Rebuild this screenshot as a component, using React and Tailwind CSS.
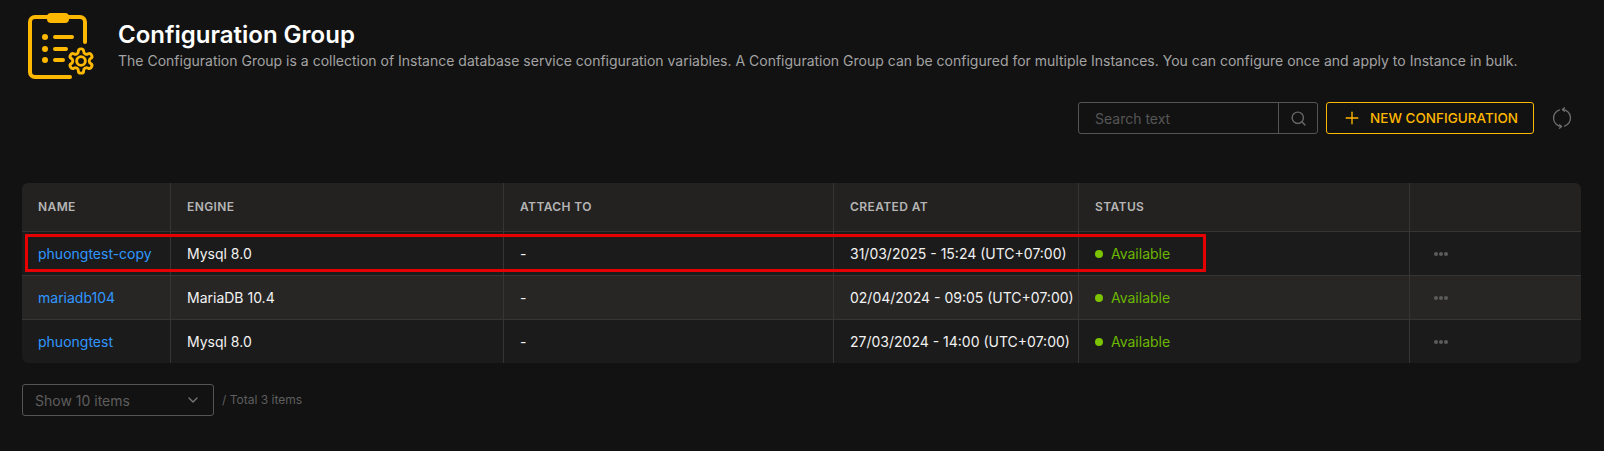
import React from 'react'
import { Search, Plus, ChevronDown } from 'lucide-react'

const rows = [
  { name: 'phuongtest-copy', engine: 'Mysql 8.0', created: '31/03/2025 - 15:24 (UTC+07:00)', bg: 'bg-[#1c1b1b]' },
  { name: 'mariadb104', engine: 'MariaDB 10.4', created: '02/04/2024 - 09:05 (UTC+07:00)', bg: 'bg-[#272625]' },
  { name: 'phuongtest', engine: 'Mysql 8.0', created: '27/03/2024 - 14:00 (UTC+07:00)', bg: 'bg-[#1c1b1b]' },
]

const GroupIcon = () => (
  <svg width="72" height="72" viewBox="26 10 72 72" fill="none" stroke="#ffb800" strokeLinecap="round" strokeLinejoin="round" className="shrink-0">
    <path d="M85 42V22a5 5 0 0 0-5-5H35a5 5 0 0 0-5 5v50a5 5 0 0 0 5 5h35" strokeWidth="4" />
    <rect x="47" y="13" width="22" height="10" rx="4" fill="#ffb800" stroke="none" />
    <circle cx="45" cy="37" r="3" fill="#ffb800" stroke="none" />
    <circle cx="45" cy="49" r="3" fill="#ffb800" stroke="none" />
    <circle cx="45" cy="60" r="3" fill="#ffb800" stroke="none" />
    <path d="M55 37h17M55 49h11M55 60h8" strokeWidth="4" />
    <svg x="66.5" y="46.5" width="29" height="29" viewBox="0 0 24 24" strokeWidth="2.4">
      <path d="M12.22 2h-.44a2 2 0 0 0-2 2v.18a2 2 0 0 1-1 1.73l-.43.25a2 2 0 0 1-2 0l-.15-.08a2 2 0 0 0-2.73.73l-.22.38a2 2 0 0 0 .73 2.73l.15.1a2 2 0 0 1 1 1.72v.51a2 2 0 0 1-1 1.74l-.15.09a2 2 0 0 0-.73 2.73l.22.38a2 2 0 0 0 2.73.73l.15-.08a2 2 0 0 1 2 0l.43.25a2 2 0 0 1 1 1.73V20a2 2 0 0 0 2 2h.44a2 2 0 0 0 2-2v-.18a2 2 0 0 1 1-1.73l.43-.25a2 2 0 0 1 2 0l.15.08a2 2 0 0 0 2.73-.73l.22-.39a2 2 0 0 0-.73-2.73l-.15-.08a2 2 0 0 1-1-1.74v-.5a2 2 0 0 1 1-1.74l.15-.09a2 2 0 0 0 .73-2.73l-.22-.38a2 2 0 0 0-2.73-.73l-.15.08a2 2 0 0 1-2 0l-.43-.25a2 2 0 0 1-1-1.73V4a2 2 0 0 0-2-2z" />
      <circle cx="12" cy="12" r="3.6" />
    </svg>
  </svg>
)

const SyncIcon = () => (
  <svg width="22" height="22" viewBox="0 0 22 22" fill="none" stroke="#6e6e6e" strokeWidth="1.3" strokeLinecap="round" strokeLinejoin="round">
    <path d="M13.5 19.1A8.5 8.5 0 0 0 11.5 2.5" />
    <path d="M8.5 2.9A8.5 8.5 0 0 0 10.5 19.5" />
    <path d="M13.5 0.8 11.5 2.5 13.5 4.2" />
    <path d="M8.5 17.8 10.5 19.5 8.5 21.2" />
  </svg>
)

const cell = 'border-r border-[#353535] last:border-r-0 px-4 h-full flex items-center whitespace-nowrap'

const Row = ({ row }) => (
  <div className={`grid grid-cols-[149px_333px_330px_245px_331px_1fr] h-[44px] border-t border-[#353535] text-[14px] ${row.bg}`}>
    <div className={`${cell} text-[#2f97ff]`}>{row.name}</div>
    <div className={`${cell} text-[#f2f2f2]`}>{row.engine}</div>
    <div className={`${cell} text-[#f2f2f2]`}>-</div>
    <div className={`${cell} text-[#f2f2f2]`}>{row.created}</div>
    <div className={`${cell} gap-2 text-[#6bb700]`}>
      <span className="w-2 h-2 rounded-full bg-[#7cc300]" />
      Available
    </div>
    <div className={`${cell} pl-[24px] gap-[1px]`}>
      <span className="w-[4px] h-[4px] rounded-full bg-[#5c5c5c]" />
      <span className="w-[4px] h-[4px] rounded-full bg-[#5c5c5c]" />
      <span className="w-[4px] h-[4px] rounded-full bg-[#5c5c5c]" />
    </div>
  </div>
)

const App = () => {
  return (
    <div className="w-[1604px] h-[451px] overflow-hidden bg-[#121212] font-['Inter',sans-serif]">
      <div className="flex items-center pl-[26px] pt-[10px]">
        <GroupIcon />
        <div className="ml-[20px] -mt-[2px]">
          <h1 className="text-[24px] leading-[32px] font-semibold text-white">Configuration Group</h1>
          <p className="text-[14px] leading-[20px] text-[#a3a3a3]">The Configuration Group is a collection of Instance database service configuration variables. A Configuration Group can be configured for multiple Instances. You can configure once and apply to Instance in bulk.</p>
        </div>
      </div>

      <div className="flex justify-end items-center mt-[20px] pr-[31px]">
        <div className="flex w-[240px] h-[32px] border border-[#555] rounded-[3px] text-[14px] text-[#565656]">
          <div className="flex-1 pl-4 flex items-center">Search text</div>
          <div className="w-[39px] border-l border-[#555] flex items-center justify-center">
            <Search size={17} className="text-[#666]" />
          </div>
        </div>
        <button className="ml-[8px] w-[208px] h-[32px] border border-[#ffb800] rounded-[3px] flex items-center justify-center gap-2 text-[13.5px] font-medium text-[#ffb800]">
          <Plus size={20} strokeWidth={1.6} />
          NEW CONFIGURATION
        </button>
        <div className="ml-[17px]"><SyncIcon /></div>
      </div>

      <div className="ml-[22px] mr-[23px] mt-[49px] rounded-[6px] overflow-hidden">
        <div className="grid grid-cols-[149px_333px_330px_245px_331px_1fr] h-[48px] bg-[#232221] text-[12px] font-semibold tracking-[0.4px] text-[#b5b5b5]">
          <div className={cell}>NAME</div>
          <div className={cell}>ENGINE</div>
          <div className={cell}>ATTACH TO</div>
          <div className={cell}>CREATED AT</div>
          <div className={cell}>STATUS</div>
          <div className={cell}></div>
        </div>
        {rows.map((row) => <Row key={row.name} row={row} />)}
      </div>

      <div className="flex items-center mt-[21px] ml-[22px]">
        <div className="w-[192px] h-[32px] border border-[#555] rounded-[3px] flex items-center justify-between pl-3 pr-3 text-[14px] text-[#5e5e5e]">
          Show 10 items
          <ChevronDown size={16} className="text-[#777]" />
        </div>
        <span className="ml-2 text-[12px] text-[#5e5e5e]">/ Total 3 items</span>
      </div>

      {/* highlight put on the screenshot */}
      <div className="absolute left-[25px] top-[234px] w-[1181px] h-[38px] border-[3px] border-[#e60000]" />
    </div>
  )
}

export default App
